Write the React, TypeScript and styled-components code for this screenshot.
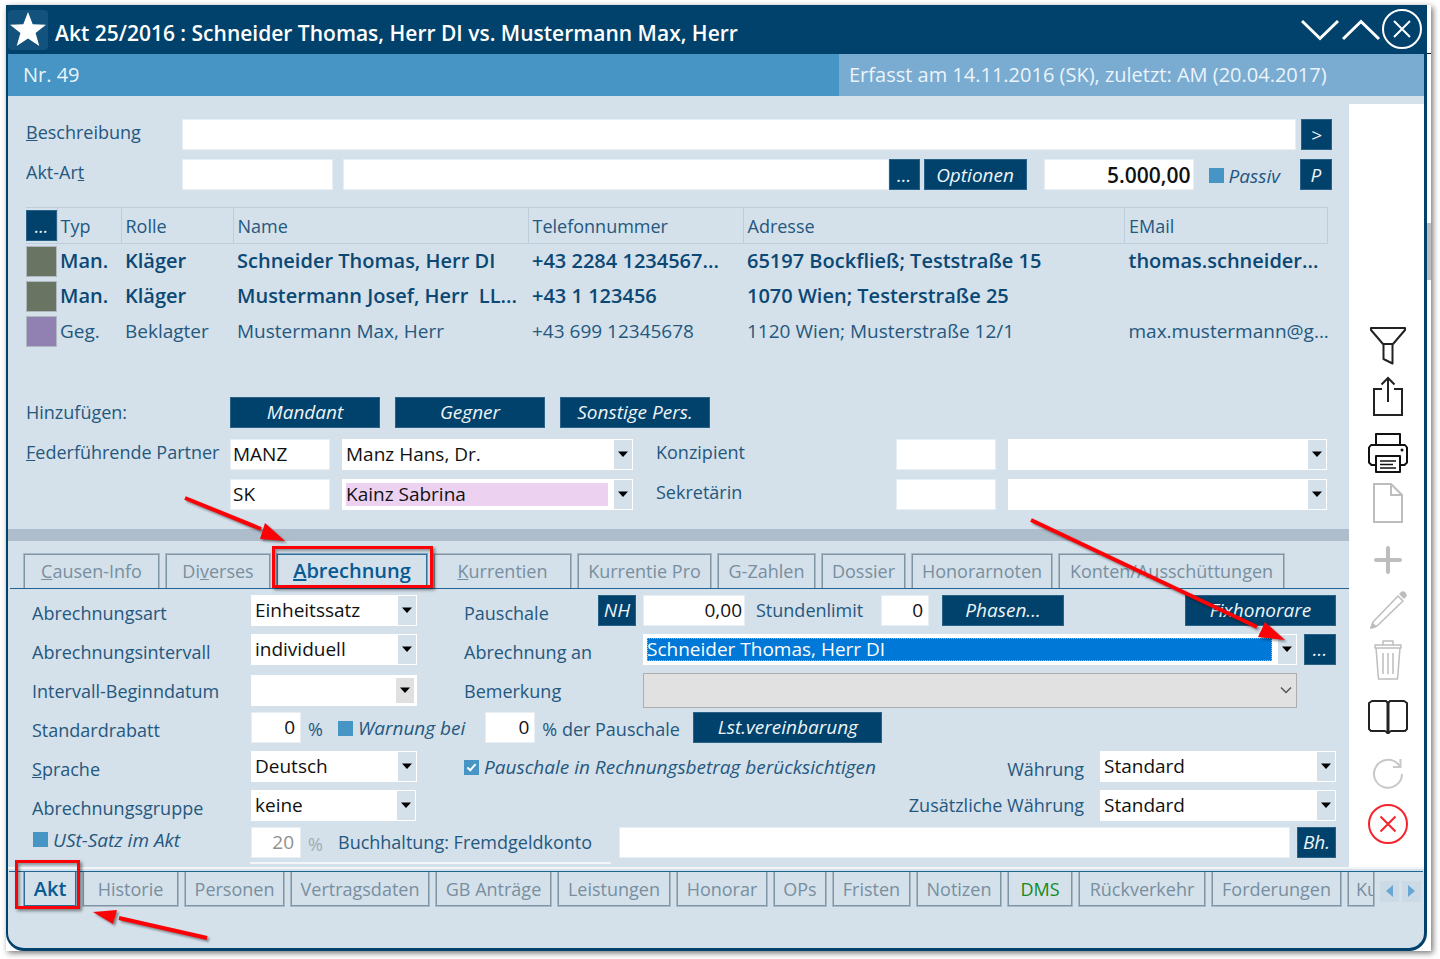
import React from "react";
import styled, { createGlobalStyle, css } from "styled-components";

const navy = "#00426b";
const panel = "#d4e0ea";
const ink = "#24587f";

const GlobalStyle = createGlobalStyle`
  *, *::before, *::after { box-sizing: border-box; }
  body {
    margin: 0;
    background: #fff;
    color: ${ink};
    font-family: "Open Sans", "Noto Sans", sans-serif;
    font-size: 19px;
    line-height: 26px;
  }
  button, input, select { font: inherit; color: inherit; margin: 0; }
  button { cursor: pointer; }
`;

/* ---------- window frame ---------- */

const Page = styled.div`
  min-height: 100vh;
  padding: 5px 9px 9px 6px;
  display: flex;
`;

const Backdrop = styled.div`
  flex: 1;
  min-width: 0;
  display: flex;
  padding-right: 4px;
  background: linear-gradient(#bdbdbd, #bdbdbd) right 218px / 4px 57px no-repeat,
    linear-gradient(#111, #111) right 48px / 4px 1px no-repeat, #fff;
  box-shadow: 2px 2px 6px rgba(0, 0, 0, 0.55);
`;

const Window = styled.main`
  flex: 1;
  min-width: 0;
  display: flex;
  flex-direction: column;
  border: 0 solid ${navy};
  border-width: 0 3px 3px 2px;
  border-radius: 0 0 18px 18px;
  background: ${panel};
`;

const TitleBar = styled.header`
  display: flex;
  align-items: center;
  height: 49px;
  padding: 0 2px 0 1px;
  margin: 0 -1px;
  background: ${navy};
  color: #fff;
`;

const StarButton = styled.button`
  width: 40px;
  height: 40px;
  padding: 0;
  border: 0;
  border-radius: 4px;
  background: #13527d;
  svg { display: block; }
`;

const Title = styled.h1`
  flex: 1;
  margin: 0;
  padding: 6px 0 0 7px;
  font-size: 21px;
  line-height: 26px;
  font-weight: 600;
  white-space: nowrap;
`;

const WindowButton = styled.button`
  height: 42px;
  padding: 0;
  border: 0;
  background: none;
  svg { display: block; }
`;

const InfoBar = styled.div`
  display: grid;
  grid-template-columns: 831fr 585fr;
  height: 42px;
  font-size: 20px;
  line-height: 42px;
  color: #eaf4fb;
  border-bottom: 1px solid #b5cfe1;
`;

const InfoLeft = styled.div`
  padding-left: 15px;
  background: #4695c5;
`;

const InfoRight = styled.div`
  padding-left: 10px;
  background: #7aabd1;
`;

const Body = styled.div`
  display: grid;
  grid-template-columns: minmax(0, 1fr) 75px;
`;

const SideBar = styled.nav`
  display: flex;
  flex-direction: column;
  align-items: center;
  gap: 17px;
  margin-top: 8px;
  padding: 222px 0 0 3px;
  background: #fff;
`;

const SideGroup = styled.div`
  display: flex;
  flex-direction: column;
  gap: 10px;
`;

const SideButton = styled.button`
  width: 40px;
  height: 40px;
  padding: 0;
  border: 0;
  background: none;
  svg { display: block; }
`;

/* ---------- controls ---------- */

const Button = styled.button<{ $w: number }>`
  flex: none;
  width: ${(p) => p.$w}px;
  height: 31px;
  padding: 0;
  border: 1px solid #2a6287;
  background: ${navy};
  color: #eef4f8;
  font-style: italic;
  line-height: 26px;
  white-space: nowrap;
`;

const TextInput = styled.input<{ $w?: number; $right?: boolean; $bold?: boolean; $end?: number }>`
  ${(p) => (p.$w ? css`flex: none; width: ${p.$w}px;` : css`flex: 1; width: 0;`)}
  min-width: 0;
  height: 31px;
  padding: 0 ${(p) => p.$end ?? 2}px 0 2px;
  border: 1px solid #e8eff4;
  border-radius: 0;
  background: #fff;
  color: #111;
  text-align: ${(p) => (p.$right ? "right" : "left")};
  ${(p) => p.$bold && css`font-size: 21px; font-weight: 600;`}
  &:disabled { color: #8f8f8f; }
`;

const Check = styled.input.attrs({ type: "checkbox" })`
  appearance: none;
  flex: none;
  position: relative;
  width: 15px;
  height: 15px;
  background: #4695c5;
  &:checked::after {
    content: "";
    position: absolute;
    left: 5px;
    top: 2px;
    width: 5px;
    height: 9px;
    border: solid #fff;
    border-width: 0 2px 2px 0;
    transform: rotate(42deg);
  }
`;

const CheckLabel = styled.label`
  display: flex;
  align-items: center;
  gap: 5px;
  padding-top: 2px;
  font-style: italic;
  white-space: nowrap;
`;

type Tone = "plain" | "pink" | "focus" | "disabled" | "date";

const SelectFrame = styled.div<{ $w?: number; $tone: Tone }>`
  position: relative;
  display: flex;
  ${(p) => (p.$w ? css`flex: none; width: ${p.$w}px;` : css`flex: 1; min-width: 0;`)}
  height: ${(p) => (p.$tone === "disabled" ? 35 : 31)}px;
  padding: 1px 1px 1px 4px;
  border: ${(p) => (p.$tone === "disabled" ? "1px solid #adadad" : "0")};
  background: ${(p) => (p.$tone === "disabled" ? "#e1e1e1" : "#fff")};
`;

const NativeSelect = styled.select<{ $tone: Tone }>`
  appearance: none;
  flex: 1;
  min-width: 0;
  margin: 3px 6px 3px 0;
  padding: 0;
  border: 0;
  border-radius: 0;
  outline: 0;
  background: ${(p) => (p.$tone === "pink" ? "#ecd1f1" : "transparent")};
  color: #111;
  line-height: 22px;
  opacity: 1;
  ${(p) =>
    p.$tone === "focus" &&
    css`
      background: #0078d7;
      color: #fff;
      outline: 1px dotted #f0a060;
      outline-offset: -1px;
    `}
`;

const DropArrow = styled.span<{ $tone: Tone }>`
  flex: none;
  display: flex;
  align-items: center;
  justify-content: center;
  width: 18px;
  background: ${(p) => (p.$tone === "date" ? "#e0e0e0" : p.$tone === "disabled" ? "none" : panel)};
  ${(p) => p.$tone === "date" && css`margin: 2px;`}
  pointer-events: none;
`;

function Select({ id, label, value, w, tone = "plain", children }: {
  id: string; label?: string; value?: string; w?: number; tone?: Tone; children?: React.ReactNode;
}) {
  return (
    <SelectFrame $w={w} $tone={tone}>
      <NativeSelect id={id} aria-label={label} $tone={tone} disabled={tone === "disabled"}>
        <option>{value ?? ""}</option>
      </NativeSelect>
      <DropArrow $tone={tone}>
        {tone === "disabled" ? (
          <svg width="14" height="10" viewBox="0 0 14 10"><path d="M2 2.500l5 5 5-5" fill="none" stroke="#555" strokeWidth="1.500" /></svg>
        ) : (
          <svg width="10" height="6" viewBox="0 0 10 6"><path d="M0 0.500h10L5 6z" fill="#000" /></svg>
        )}
      </DropArrow>
      {children}
    </SelectFrame>
  );
}

/* ---------- upper form ---------- */

const Upper = styled.section`
  display: flex;
  flex-direction: column;
  gap: 9px;
  padding: 23px 17px 19px 18px;
`;

const UpperRow = styled.div`
  display: grid;
  grid-template-columns: 156px minmax(0, 1fr);
  align-items: start;
`;

const Line = styled.div<{ $gap?: number }>`
  display: flex;
  align-items: center;
  gap: ${(p) => p.$gap ?? 5}px;
  min-width: 0;
`;

const Spacer = styled.span<{ $w?: number }>`
  ${(p) => (p.$w ? css`flex: none; width: ${p.$w}px;` : css`flex: 1;`)}
`;

const Label = styled.label<{ $w?: number }>`
  ${(p) => p.$w && css`flex: none; width: ${p.$w}px;`}
  font-size: 18px;
  white-space: nowrap;
`;

const PersonTable = styled.table`
  width: calc(100% - 4px);
  margin: 8px 0 39px;
  border-collapse: collapse;
  table-layout: fixed;
  th, td {
    padding: 0 0 0 4px;
    text-align: left;
    font-weight: inherit;
    white-space: pre;
    overflow: hidden;
  }
  th:first-child, td:first-child { padding: 0; }
  th:nth-child(2), td:nth-child(2) { padding-left: 3px; }
  th {
    height: 36px;
    border: 1px solid #bccedc;
    font-size: 18px;
    font-weight: 400;
  }
  th:first-child { border-left: 0; border-right: 0; }
  td { height: 35px; }
  th button { display: block; }
`;

const PersonRow = styled.tr<{ $bold?: boolean }>`
  font-size: ${(p) => (p.$bold ? 20 : 19)}px;
  font-weight: ${(p) => (p.$bold ? 600 : 400)};
  color: ${(p) => (p.$bold ? "#0b4874" : ink)};
`;

const Swatch = styled.div<{ $color: string }>`
  width: 31px;
  height: 31px;
  border: 1px solid #b0b8bf;
  background: ${(p) => p.$color};
`;

const PartnerRow = styled.div`
  display: grid;
  grid-template-columns: 204px 403px 23px 240px minmax(0, 1fr);
  align-items: start;
  padding-right: 5px;
`;

const AddRow = styled.div`
  display: grid;
  grid-template-columns: 204px minmax(0, 1fr);
  align-items: center;
  margin-bottom: 2px;
  font-size: 18px;
`;

const AddButton = styled(Button)`
  font-size: 19px;
`;

const Divider = styled.hr`
  height: 12px;
  margin: 0;
  border: 0;
  background: #aebdcb;
`;

/* ---------- tabs ---------- */

const TabStrip = styled.div<{ $bottom?: boolean }>`
  display: flex;
  gap: 5px;
  ${(p) =>
    p.$bottom
      ? css`
          border-top: 1px solid #1f6593;
          margin: 2px 1px 0;
          padding: 0 2px 41px 14px;
        `
      : css`
          border-bottom: 1px solid #1f6593;
          margin: 12px 0 0 2px;
          padding-left: 13px;
        `}
`;

const TabButton = styled.button<{ $w: number; $active?: boolean; $bottom?: boolean; $green?: boolean; $shrink?: boolean }>`
  --edge: ${(p) => (p.$active ? "#2f6e98" : "#7f95a3")};
  position: relative;
  flex: ${(p) => (p.$shrink ? "0 1 auto" : "none")};
  width: ${(p) => p.$w}px;
  height: 35px;
  padding: 0;
  border: 1px solid ${(p) => (p.$active ? "#7ea5c1" : "#a9bac6")};
  ${(p) =>
    p.$bottom
      ? css`
          border-top: 0;
          box-shadow: inset 1px -1px var(--edge), inset -1px 0 var(--edge);
        `
      : css`
          border-bottom: 0;
          box-shadow: inset 1px 1px var(--edge), inset -1px 0 var(--edge);
        `}
  background: ${panel};
  color: ${(p) => (p.$green ? "#138a1c" : "#788f9f")};
  font-size: 18px;
  line-height: 32px;
  white-space: nowrap;
  ${(p) =>
    p.$active &&
    css`
      color: #075a92;
      font-size: 20px;
      font-weight: 600;
    `}
  ${(p) =>
    p.$shrink &&
    css`
      min-width: 0;
      overflow: hidden;
      padding-left: 8px;
      text-align: left;
    `}
`;

const Scrollers = styled.div`
  flex: none;
  display: flex;
  gap: 3px;
  padding-top: 9px;
`;

const ScrollButton = styled.button`
  display: flex;
  align-items: center;
  justify-content: center;
  width: 19px;
  height: 21px;
  padding: 0;
  border: 0;
  background: #ccdae6;
`;

/* ---------- annotations over the window ---------- */

const Frame = styled.span<{ $bottom?: boolean }>`
  position: absolute;
  z-index: 2;
  inset: ${(p) => (p.$bottom ? "-12px -4px -3px -9px" : "-8px -6px 0 -5px")};
  border: 3px solid #fb0207;
  box-shadow: 2px 2px 3px rgba(0, 0, 0, 0.45), inset 2px 2px 3px rgba(0, 0, 0, 0.35);
  pointer-events: none;
`;

const Pointer = styled.svg<{ $x: number; $y: number }>`
  position: absolute;
  z-index: 3;
  left: ${(p) => p.$x}px;
  top: ${(p) => p.$y}px;
  overflow: visible;
  pointer-events: none;
  filter: drop-shadow(2px 2px 1px rgba(0, 0, 0, 0.4));
`;

const SelectPointer = styled(Pointer)`
  left: auto;
  right: 12px;
`;

/* ---------- billing form ---------- */

const Billing = styled.section`
  display: flex;
  flex-direction: column;
  gap: 8px;
  padding: 6px 13px 0 24px;
`;

const BillRow = styled.div`
  display: grid;
  grid-template-columns: 219px 213px 179px minmax(0, 1fr);
  height: 31px;
`;

const WideRow = styled.div`
  display: grid;
  grid-template-columns: 219px minmax(0, 1fr);
  height: 31px;
`;

const BillLabel = styled.label`
  padding-top: 5px;
  font-size: 18px;
  white-space: nowrap;
`;

const NhButton = styled(Button)`
  margin: 0 7px 0 -45px;
`;

const NoteLine = styled(Line)`
  align-items: flex-start;
  padding-right: 39px;
`;

const VatLabel = styled(CheckLabel)`
  align-self: start;
  padding: 0 0 0 1px;
`;

const AccountRow = styled(WideRow)`
  margin-top: -2px;
`;

const Unit = styled.span<{ $w: number; $off?: boolean }>`
  flex: none;
  width: ${(p) => p.$w}px;
  padding: 3px 0 0 7px;
  color: ${(p) => (p.$off ? "#a3abb1" : ink)};
  font-size: 18px;
  white-space: nowrap;
`;

const CutLine = styled.div`
  width: 361px;
  height: 2px;
  margin: -4px 0 3px 218px;
  background: #f3f6f9;
`;

const Edge = styled.div`
  height: 2px;
  background: #f1f5f8;
`;

const people = [
  { color: "#6a7463", bold: true, cells: ["Man.", "Kläger", "Schneider Thomas, Herr DI", "+43 2284 1234567...", "65197 Bockfließ; Teststraße 15", "thomas.schneider..."] },
  { color: "#6a7463", bold: true, cells: ["Man.", "Kläger", "Mustermann Josef, Herr  LL...", "+43 1 123456", "1070 Wien; Testerstraße 25", ""] },
  { color: "#9181b2", bold: false, cells: ["Geg.", "Beklagter", "Mustermann Max, Herr", "+43 699 12345678", "1120 Wien; Musterstraße 12/1", "max.mustermann@g..."] },
];

const lowerTabs: [string, number][] = [
  ["Historie", 97], ["Personen", 101], ["Vertragsdaten", 140], ["GB Anträge", 117], ["Leistungen", 114],
  ["Honorar", 92], ["OPs", 54], ["Fristen", 79], ["Notizen", 86], ["DMS", 66], ["Rückverkehr", 128], ["Forderungen", 131],
];

const ico = { width: 40, height: 40, viewBox: "0 0 40 40", fill: "none" } as const;

export default function App() {
  return (
    <>
      <GlobalStyle />
      <Page>
        <Backdrop>
          <Window>
            <TitleBar>
              <StarButton aria-label="Favorit">
                <svg {...ico}><path d="M20 2l4.700 12.300 13.300.4-10.400 8.200 3.700 13.100L20 28.600 8.700 36l3.700-13.100L2 14.700l13.300-.4z" fill="#fff" /></svg>
              </StarButton>
              <Title>Akt 25/2016 : Schneider Thomas, Herr DI vs. Mustermann Max, Herr</Title>
              <WindowButton aria-label="Nächster">
                <svg width="41" height="42" viewBox="0 0 41 42" fill="none"><path d="M1 12l18 17.500L37 12" stroke="#fff" strokeWidth="3" /></svg>
              </WindowButton>
              <WindowButton aria-label="Vorheriger">
                <svg width="39" height="42" viewBox="0 0 39 42" fill="none"><path d="M1 30l18-17.500L37 30" stroke="#fff" strokeWidth="3" /></svg>
              </WindowButton>
              <WindowButton aria-label="Schließen">
                <svg width="42" height="42" viewBox="0 0 42 42" fill="none" stroke="#fff" strokeWidth="2"><circle cx="21" cy="20" r="19" /><path d="M13 12l16 16M29 12L13 28" /></svg>
              </WindowButton>
            </TitleBar>
            <InfoBar>
              <InfoLeft>Nr. 49</InfoLeft>
              <InfoRight>Erfasst am 14.11.2016 (SK), zuletzt: AM (20.04.2017)</InfoRight>
            </InfoBar>

            <Body>
              <div>
                <Upper>
                  <UpperRow>
                    <Label htmlFor="desc"><u>B</u>eschreibung</Label>
                    <Line>
                      <TextInput id="desc" />
                      <Button $w={31}>&gt;</Button>
                    </Line>
                  </UpperRow>
                  <UpperRow>
                    <Label htmlFor="kind">Akt-Ar<u>t</u></Label>
                    <Line $gap={0}>
                      <TextInput id="kind" $w={151} />
                      <Spacer $w={10} />
                      <TextInput aria-label="Akt-Art Bezeichnung" />
                      <Button $w={31}>...</Button>
                      <Spacer $w={4} />
                      <Button $w={103}>Optionen</Button>
                      <Spacer $w={17} />
                      <TextInput aria-label="Streitwert" $w={150} $right $bold defaultValue="5.000,00" />
                      <Spacer $w={15} />
                      <CheckLabel><Check />Passiv</CheckLabel>
                      <Spacer $w={20} />
                      <Button $w={32}>P</Button>
                    </Line>
                  </UpperRow>

                  <PersonTable>
                    <colgroup>
                      <col width="31" /><col width="64" /><col width="112" /><col width="295" /><col width="215" /><col /><col width="203" />
                    </colgroup>
                    <thead>
                      <tr>
                        <th><Button $w={31}>...</Button></th>
                        <th>Typ</th><th>Rolle</th><th>Name</th><th>Telefonnummer</th><th>Adresse</th><th>EMail</th>
                      </tr>
                    </thead>
                    <tbody>
                      {people.map((p, i) => (
                        <PersonRow key={i} $bold={p.bold}>
                          <td><Swatch $color={p.color} /></td>
                          {p.cells.map((c, j) => <td key={j}>{c}</td>)}
                        </PersonRow>
                      ))}
                    </tbody>
                  </PersonTable>

                  <AddRow>
                    <span>Hinzufügen:</span>
                    <Line $gap={15}>
                      <AddButton $w={150}>Mandant</AddButton>
                      <AddButton $w={150}>Gegner</AddButton>
                      <AddButton $w={150}>Sonstige Pers.</AddButton>
                    </Line>
                  </AddRow>
                  <PartnerRow>
                    <Label htmlFor="p1"><u>F</u>ederführende Partner</Label>
                    <Line $gap={12}>
                      <TextInput id="p1" $w={100} defaultValue="MANZ" />
                      <Select id="p1n" label="Partner" value="Manz Hans, Dr." />
                    </Line>
                    <span />
                    <Label htmlFor="k1">Konzipient</Label>
                    <Line $gap={12}>
                      <TextInput id="k1" $w={100} />
                      <Select id="k1n" label="Konzipient Name" />
                    </Line>
                  </PartnerRow>
                  <PartnerRow>
                    <span />
                    <Line $gap={12}>
                      <TextInput aria-label="Zweiter Partner" $w={100} defaultValue="SK" />
                      <Select id="p2n" label="Zweiter Partner Name" value="Kainz Sabrina" tone="pink" />
                    </Line>
                    <span />
                    <Label htmlFor="s1">Sekretärin</Label>
                    <Line $gap={12}>
                      <TextInput id="s1" $w={100} />
                      <Select id="s1n" label="Sekretärin Name" />
                    </Line>
                  </PartnerRow>
                </Upper>

                <Divider />

                <TabStrip>
                  <TabButton $w={137}><u>C</u>ausen-Info</TabButton>
                  <TabButton $w={106}>Di<u>v</u>erses</TabButton>
                  <TabButton $w={152} $active>
                    <u>A</u>brechnung
                    <Frame />
                    <Pointer $x={-92} $y={-56} width="100" height="45">
                      <path d="M0 0L76 31" stroke="#fb0207" strokeWidth="4" />
                      <path d="M100 43L80 25L75 41z" fill="#fb0207" />
                    </Pointer>
                  </TabButton>
                  <TabButton $w={139}><u>K</u>urrentien</TabButton>
                  <TabButton $w={135}>Kurrentie Pro</TabButton>
                  <TabButton $w={99}>G-Zahlen</TabButton>
                  <TabButton $w={85}>Dossier</TabButton>
                  <TabButton $w={142}>Honorarnoten</TabButton>
                  <TabButton $w={227}>Konten/Ausschüttungen</TabButton>
                </TabStrip>

                <Billing>
                  <BillRow>
                    <BillLabel htmlFor="art">Abrechnungsart</BillLabel>
                    <Line><Select id="art" w={166} value="Einheitssatz" /></Line>
                    <BillLabel htmlFor="flat">Pauschale</BillLabel>
                    <Line $gap={0}>
                      <NhButton $w={38}>NH</NhButton>
                      <TextInput id="flat" $w={102} $right defaultValue="0,00" />
                      <Spacer $w={11} />
                      <Label htmlFor="limit" $w={125}>Stundenlimit</Label>
                      <TextInput id="limit" $w={48} $right $end={5} defaultValue="0" />
                      <Spacer $w={13} />
                      <Button $w={122}>Phasen...</Button>
                      <Spacer />
                      <Button $w={151}>Fixhonorare</Button>
                    </Line>
                  </BillRow>
                  <BillRow>
                    <BillLabel htmlFor="interval">Abrechnungsintervall</BillLabel>
                    <Line><Select id="interval" w={166} value="individuell" /></Line>
                    <BillLabel htmlFor="billto">Abrechnung an</BillLabel>
                    <Line $gap={7}>
                      <Select id="billto" value="Schneider Thomas, Herr DI" tone="focus">
                        <SelectPointer $x={0} $y={-114} width="254" height="120">
                          <path d="M0 0L226 107" stroke="#fb0207" strokeWidth="4" />
                          <path d="M254 120L234 102L227 117z" fill="#fb0207" />
                        </SelectPointer>
                      </Select>
                      <Button $w={32}>...</Button>
                    </Line>
                  </BillRow>
                  <BillRow>
                    <BillLabel htmlFor="begin">Intervall-Beginndatum</BillLabel>
                    <Line><Select id="begin" w={166} tone="date" /></Line>
                    <BillLabel htmlFor="note">Bemerkung</BillLabel>
                    <NoteLine><Select id="note" tone="disabled" /></NoteLine>
                  </BillRow>
                  <WideRow>
                    <BillLabel htmlFor="rebate">Standardrabatt</BillLabel>
                    <Line $gap={0}>
                      <TextInput id="rebate" $w={50} $right $end={5} defaultValue="0" />
                      <Unit $w={37}>%</Unit>
                      <CheckLabel><Check />Warnung bei</CheckLabel>
                      <Spacer $w={20} />
                      <TextInput aria-label="Warnung bei Prozent" $w={50} $right $end={5} defaultValue="0" />
                      <Unit $w={158}>% der Pauschale</Unit>
                      <Button $w={189}>Lst.vereinbarung</Button>
                    </Line>
                  </WideRow>
                  <WideRow>
                    <BillLabel htmlFor="lang"><u>S</u>prache</BillLabel>
                    <Line $gap={0}>
                      <Select id="lang" w={166} value="Deutsch" />
                      <Spacer $w={47} />
                      <CheckLabel><Check defaultChecked />Pauschale in Rechnungsbetrag berücksichtigen</CheckLabel>
                      <Spacer />
                      <BillLabel htmlFor="cur">Währung</BillLabel>
                      <Spacer $w={16} />
                      <Select id="cur" w={236} value="Standard" />
                    </Line>
                  </WideRow>
                  <WideRow>
                    <BillLabel htmlFor="group">Abrechnungsgruppe</BillLabel>
                    <Line $gap={0}>
                      <Select id="group" w={165} value="keine" />
                      <Spacer />
                      <Label htmlFor="cur2">Zusätzliche Währung</Label>
                      <Spacer $w={16} />
                      <Select id="cur2" w={236} value="Standard" />
                    </Line>
                  </WideRow>
                  <AccountRow>
                    <VatLabel><Check />USt-Satz im Akt</VatLabel>
                    <Line $gap={0}>
                      <TextInput aria-label="USt-Satz" $w={50} $right $end={6} defaultValue="20" disabled />
                      <Unit $w={37} $off>%</Unit>
                      <Label htmlFor="acct" $w={281}>Buchhaltung: Fremdgeldkonto</Label>
                      <TextInput id="acct" />
                      <Spacer $w={7} />
                      <Button $w={39}>Bh.</Button>
                    </Line>
                  </AccountRow>
                  <CutLine />
                </Billing>
              </div>

              <SideBar>
                <SideGroup>
                  <SideButton aria-label="Filter">
                    <svg {...ico} stroke="#222" strokeWidth="2" strokeLinejoin="round"><path d="M3 2h34v2L25 18H15L3 4zM15.500 18v15l9 4.500V18" /></svg>
                  </SideButton>
                  <SideButton aria-label="Exportieren">
                    <svg {...ico} stroke="#222" strokeWidth="2"><path d="M14 13H6v26h28V13h-8M20 26V2M13.500 8.500L20 2l6.500 6.500" /></svg>
                  </SideButton>
                </SideGroup>
                <SideGroup>
                  <SideButton aria-label="Drucken">
                    <svg {...ico} stroke="#111" strokeWidth="2" strokeLinejoin="round"><path d="M8 12V1h24v11M8 32H3.500L1 29.500V14.500L3 12h34l2 2.500v15L36.500 32H32M8 23h24v16H8z" /><path d="M12 28h16M12 31.500h13M12 35h16" strokeWidth="1.500" /><circle cx="34" cy="17" r="1.500" fill="#111" stroke="none" /></svg>
                  </SideButton>
                  <SideButton aria-label="Neu">
                    <svg {...ico} stroke="#bdbdbd" strokeWidth="2"><path d="M6 1h17l11 11v27H6zM23 1v11h11" /></svg>
                  </SideButton>
                </SideGroup>
                <SideGroup>
                  <SideButton aria-label="Hinzufügen">
                    <svg {...ico} stroke="#bdbdbd" strokeWidth="4" strokeLinecap="round"><path d="M20 8v24M8 20h24" /></svg>
                  </SideButton>
                  <SideButton aria-label="Bearbeiten">
                    <svg {...ico} stroke="#bdbdbd" strokeWidth="1.500" strokeLinejoin="round"><path d="M5 32L30 6l5 5L9 36l-6 2z" /><path d="M32 4l2-2q4 0 4 4l-2 2zM4.500 33.500L8 36.500 3 38z" fill="#bdbdbd" /></svg>
                  </SideButton>
                  <SideButton aria-label="Löschen">
                    <svg {...ico} stroke="#bdbdbd" strokeWidth="1.500" strokeLinejoin="round"><path d="M7 5h26v3H7zM15 5V1h10v4M8 8l2.500 31h19L32 8M15 13v21M20 13v21M25 13v21" /></svg>
                  </SideButton>
                </SideGroup>
                <SideGroup>
                  <SideButton aria-label="Akt öffnen">
                    <svg {...ico} stroke="#222" strokeWidth="2" strokeLinejoin="round"><path d="M20 6l-2-2H4L1 6v26l2 2h14l3 2 3-2h14l2-2V6l-3-2H22z" /><path d="M20 5v32" strokeWidth="3" /></svg>
                  </SideButton>
                </SideGroup>
                <SideGroup>
                  <SideButton aria-label="Aktualisieren">
                    <svg {...ico} stroke="#c8c8c8" strokeWidth="2"><path d="M34 20a14 14 0 1 1-4-10l2 2.500M32.500 5v8H25" /></svg>
                  </SideButton>
                  <SideButton aria-label="Abbrechen">
                    <svg {...ico} stroke="#f5242c" strokeWidth="2"><circle cx="20" cy="20" r="19" /><path d="M12.500 12.500l15 15M27.500 12.500l-15 15" /></svg>
                  </SideButton>
                </SideGroup>
              </SideBar>
            </Body>

            <Edge />
            <TabStrip $bottom>
              <TabButton $w={54} $bottom $active>
                Akt
                <Frame $bottom />
                <Pointer $x={69} $y={39} width="114" height="28">
                  <path d="M26 7L114 27" stroke="#fb0207" strokeWidth="4" />
                  <path d="M0 1L24 -1L20 13z" fill="#fb0207" />
                </Pointer>
              </TabButton>
              {lowerTabs.map(([name, w]) => (
                <TabButton key={name} $w={w} $bottom $green={name === "DMS"}>{name}</TabButton>
              ))}
              <TabButton $w={40} $bottom $shrink>Ku</TabButton>
              <Scrollers>
                <ScrollButton aria-label="Zurück"><svg width="7" height="12"><path d="M7 0v12L0 6z" fill="#68a7d3" /></svg></ScrollButton>
                <ScrollButton aria-label="Weiter"><svg width="7" height="12"><path d="M0 0v12l7-6z" fill="#68a7d3" /></svg></ScrollButton>
              </Scrollers>
            </TabStrip>
          </Window>
        </Backdrop>
      </Page>
    </>
  );
}
